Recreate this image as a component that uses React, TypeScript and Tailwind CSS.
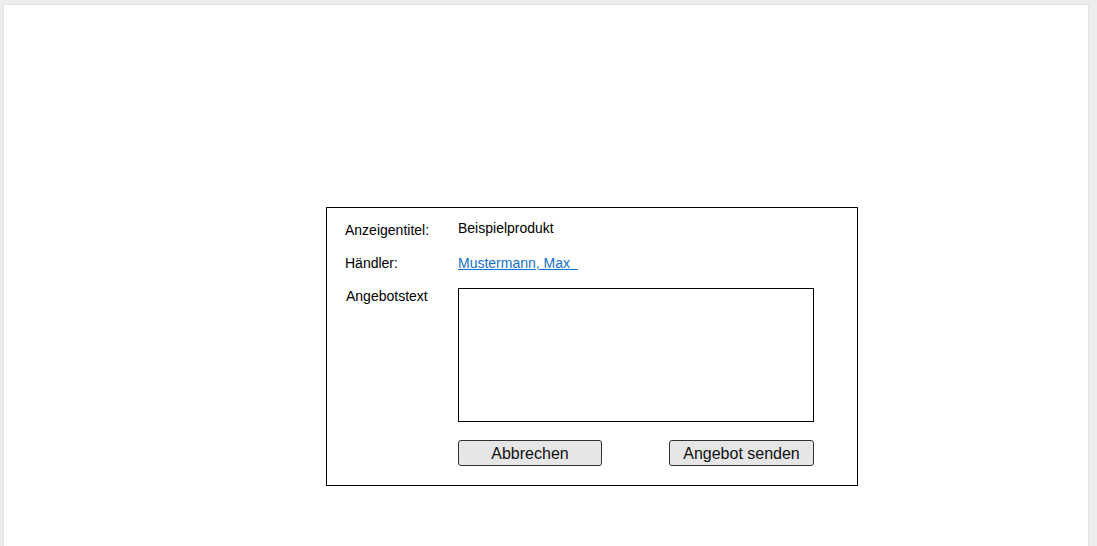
export default function App() {
  return (
    <div
      className="h-[546px] overflow-hidden bg-[#ededed] pt-[4px] pl-[3px] pr-[8px]"
      style={{ fontFamily: '"Liberation Sans", Arial, sans-serif' }}
    >
      <div className="h-[600px] bg-white border border-[#e2e2e2] pt-[202px] pl-[322px]">
        <div className="w-[532px] h-[279px] border border-black pt-[13px] pl-[18px] text-[14px] leading-[15px] text-black">
          <div className="flex">
            <div className="w-[113px] mt-[2px]">Anzeigentitel:</div>
            <div>Beispielprodukt</div>
          </div>
          <div className="flex mt-[18px]">
            <div className="w-[113px]">Händler:</div>
            <a href="#" className="text-[#1470c8] underline">
              Mustermann, Max&nbsp;&nbsp;
            </a>
          </div>
          <div className="flex mt-[17px]">
            <div className="w-[113px] mt-[1px] pl-[1px]">Angebotstext</div>
            <div className="flex flex-col">
              <textarea className="w-[356px] h-[134px] border border-black resize-none outline-none" />
              <div className="flex justify-between mt-[18px]">
                <button className="w-[144px] h-[26px] border border-[#333] rounded-[3px] bg-[#e6e6e6] pt-[2px] text-[16px] leading-[18px] text-[#111]">
                  Abbrechen
                </button>
                <button className="w-[145px] h-[26px] border border-[#333] rounded-[3px] bg-[#e6e6e6] pt-[2px] text-[16px] leading-[18px] text-[#111]">
                  Angebot senden
                </button>
              </div>
            </div>
          </div>
        </div>
      </div>
    </div>
  );
}
